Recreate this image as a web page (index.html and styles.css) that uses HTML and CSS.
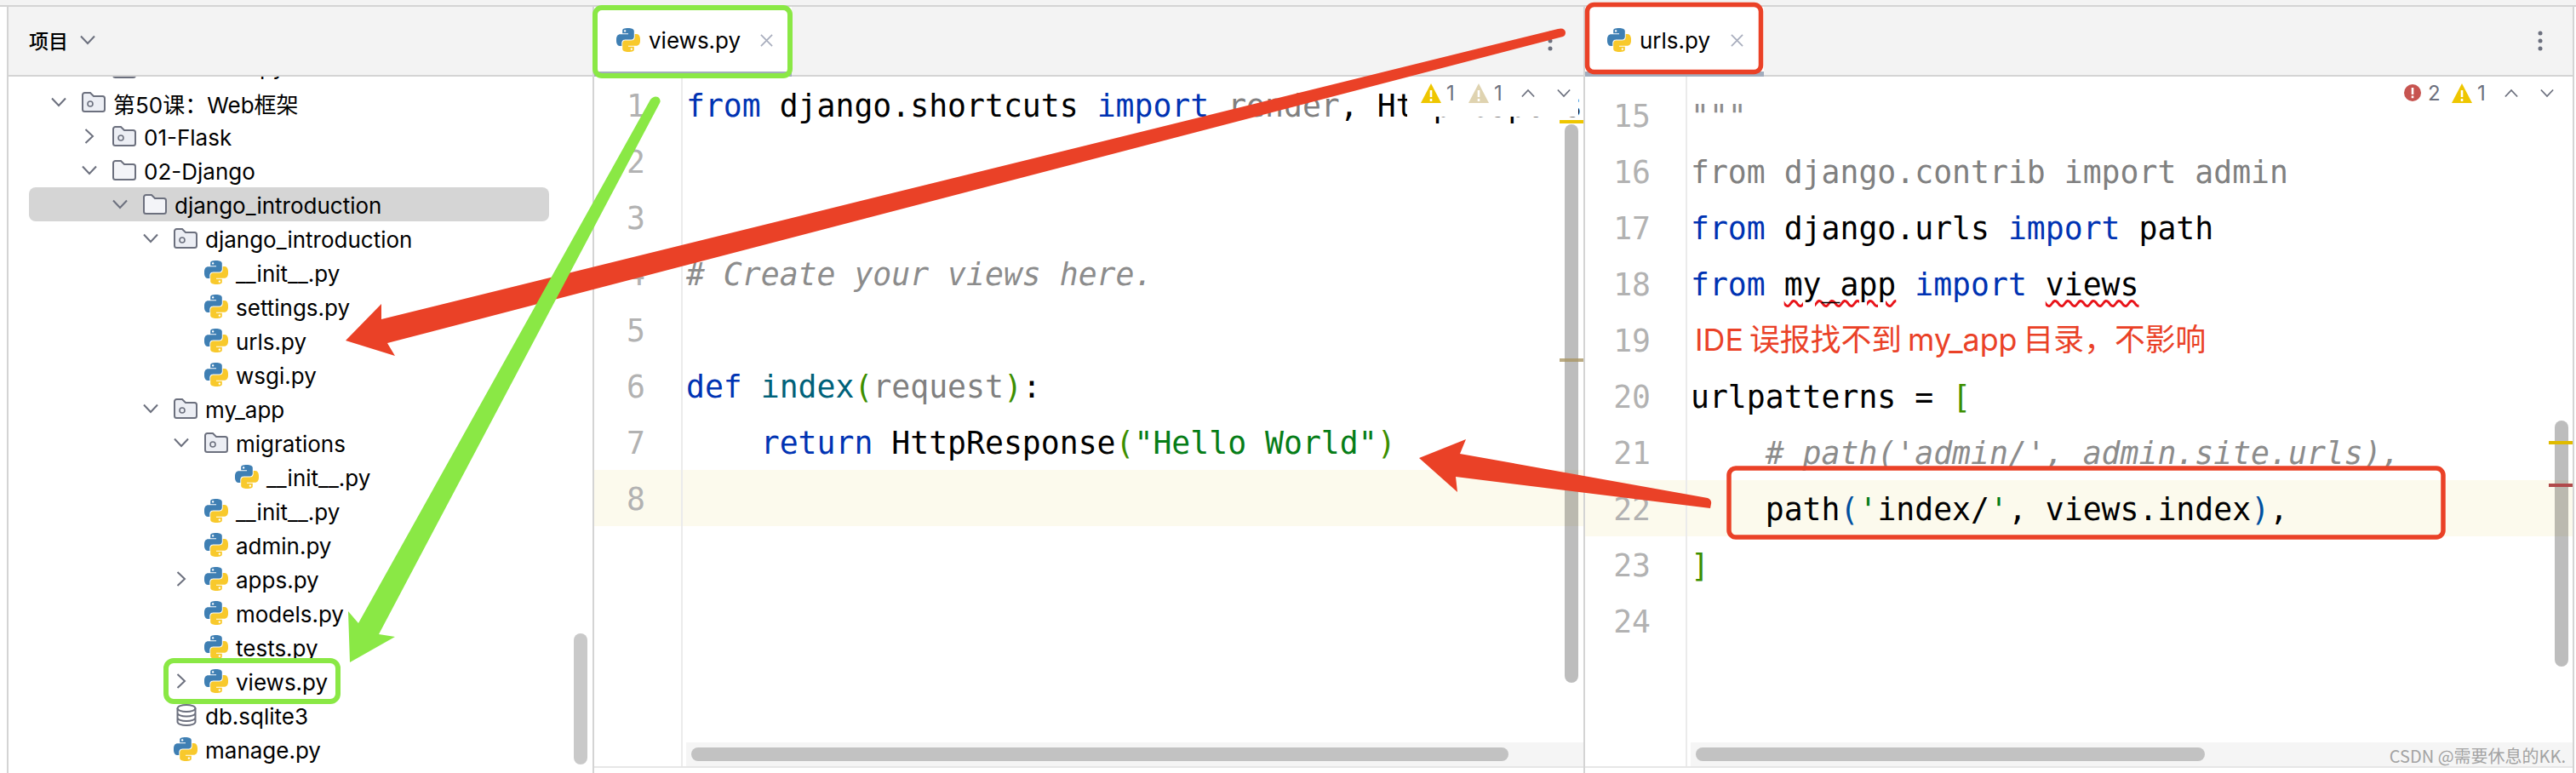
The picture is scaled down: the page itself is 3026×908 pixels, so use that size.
FILE: index.html
```html
<!DOCTYPE html>
<html lang="zh">
<head>
<meta charset="utf-8">
<title>views.py - urls.py</title>
<link rel="stylesheet" href="styles.css">
</head>
<body>
<svg class="defs" width="0" height="0" aria-hidden="true">
  <symbol id="py" viewBox="0 0 24 24">
    <path fill="#3f7fb3" fill-rule="evenodd" d="M14.25.18l.9.2.73.26.59.3.45.32.34.34.25.34.16.33.1.3.04.26.02.2-.01.13V8.5l-.05.63-.13.55-.21.46-.26.38-.3.31-.33.25-.35.19-.35.14-.33.1-.3.07-.26.04-.21.02H8.77l-.69.05-.59.14-.5.22-.41.27-.33.32-.27.35-.2.36-.15.37-.1.35-.07.32-.04.27-.02.21v3.06H3.17l-.21-.03-.28-.07-.32-.12-.35-.18-.36-.26-.36-.36-.35-.46-.32-.59-.28-.73-.21-.88-.14-1.05-.05-1.23.06-1.22.16-1.04.24-.87.32-.71.36-.57.4-.44.42-.33.42-.24.4-.16.36-.1.32-.05.24-.01h.16l.06.01h8.16v-.83H6.18l-.01-2.75-.02-.37.05-.34.11-.31.17-.28.25-.26.31-.23.38-.2.44-.18.51-.15.58-.12.64-.1.71-.06.77-.04.84-.02 1.27.05zm-6.3 1.98l-.23.33-.08.41.08.41.23.34.33.22.41.09.41-.09.33-.22.23-.34.08-.41-.08-.41-.23-.33-.33-.22-.41-.09-.41.09z"/>
    <path fill="#f8c92c" fill-rule="evenodd" d="M21.04 6.11l.28.06.32.12.35.18.36.27.36.35.35.47.32.59.28.73.21.88.14 1.04.05 1.23-.06 1.23-.16 1.04-.24.86-.32.71-.36.57-.4.45-.42.33-.42.24-.4.16-.36.09-.32.05-.24.02-.16-.01h-8.22v.82h5.84l.01 2.76.02.36-.05.34-.11.31-.17.29-.25.25-.31.24-.38.2-.44.17-.51.15-.58.13-.64.09-.71.07-.77.04-.84.01-1.27-.04-1.07-.14-.9-.2-.73-.25-.59-.3-.45-.33-.34-.34-.25-.34-.16-.33-.1-.3-.04-.25-.02-.2.01-.13v-5.34l.05-.64.13-.54.21-.46.26-.38.3-.32.33-.24.35-.2.35-.14.33-.1.3-.06.26-.04.21-.02.13-.01h5.84l.69-.05.59-.14.5-.21.41-.28.33-.32.27-.35.2-.36.15-.36.1-.35.07-.32.04-.28.02-.21V6.07h2.09l.14.01zm-6.47 14.25l-.23.33-.08.41.08.41.23.33.33.23.41.08.41-.08.33-.23.23-.33.08-.41-.08-.41-.23-.33-.33-.23-.41-.08-.41.08z"/>
  </symbol>
  <symbol id="folder" viewBox="0 0 28 24">
    <path fill="#f3f4f8" stroke="#6c707e" stroke-width="2" d="M1 3.5A2.5 2.5 0 0 1 3.5 1H10l4 4h10.5A2.5 2.5 0 0 1 27 7.5v13a2.5 2.5 0 0 1-2.5 2.5h-21A2.5 2.5 0 0 1 1 20.5z"/>
  </symbol>
  <symbol id="module" viewBox="0 0 28 24">
    <path fill="#eceef4" stroke="#6c707e" stroke-width="2" d="M1 3.5A2.5 2.5 0 0 1 3.5 1H10l4 4h10.5A2.5 2.5 0 0 1 27 7.5v13a2.5 2.5 0 0 1-2.5 2.5h-21A2.5 2.5 0 0 1 1 20.5z"/>
    <circle cx="10" cy="14" r="3" fill="none" stroke="#6c707e" stroke-width="1.6"/>
  </symbol>
  <symbol id="db" viewBox="0 0 24 26">
    <g fill="none" stroke="#6c707e" stroke-width="2">
      <ellipse cx="12" cy="5" rx="10.5" ry="4"/>
      <path d="M1.5 5v16c0 2.2 4.7 4 10.5 4s10.500-1.800 10.500-4V5M1.500 10.500c0 2.200 4.700 4 10.500 4s10.500-1.800 10.500-4M1.500 16c0 2.200 4.700 4 10.500 4s10.500-1.800 10.500-4"/>
    </g>
  </symbol>
  <symbol id="down" viewBox="0 0 18 12">
    <path fill="none" stroke="#6c707e" stroke-width="2" d="M1 1.500l8 8.500 8-8.500"/>
  </symbol>
  <symbol id="right" viewBox="0 0 12 18">
    <path fill="none" stroke="#6c707e" stroke-width="2" d="M1.500 1l8.500 8-8.500 8"/>
  </symbol>
  <symbol id="up" viewBox="0 0 18 12">
    <path fill="none" stroke="#6c707e" stroke-width="2" d="M1 10.500l8-8.500 8 8.500"/>
  </symbol>
  <symbol id="close" viewBox="0 0 16 16">
    <path fill="none" stroke="#a8adbd" stroke-width="1.800" d="M1 1l14 14M15 1L1 15"/>
  </symbol>
  <symbol id="dots" viewBox="0 0 6 24">
    <g fill="#6c707e"><circle cx="3" cy="3" r="2.500"/><circle cx="3" cy="12" r="2.500"/><circle cx="3" cy="21" r="2.500"/></g>
  </symbol>
  <symbol id="warn" viewBox="0 0 24 23">
    <path fill="#eec600" d="M12 0l12 23H0z"/>
    <path fill="#fff" d="M10.700 8h2.600v8h-2.600zM10.700 18h2.600v3h-2.600z"/>
  </symbol>
  <symbol id="weak" viewBox="0 0 24 23">
    <path fill="#dfd3b0" d="M12 0l12 23H0z"/>
    <path fill="#fff" d="M10.700 8h2.600v8h-2.600zM10.700 18h2.600v3h-2.600z"/>
  </symbol>
  <symbol id="err" viewBox="0 0 20 20">
    <circle cx="10" cy="10" r="10" fill="#c75450"/>
    <path fill="#fff" d="M8.700 4h2.600v8H8.700zM8.700 13.500h2.600v2.800H8.700z"/>
  </symbol>
</svg>

<div class="topstrip"></div>
<main class="workbench">
  <aside class="project">
    <header class="project-head">
      <span class="project-title">项目</span>
      <svg class="chev-d"><use href="#down"/></svg>
    </header>
    <div class="tree-clip">
      <ul class="tree">
        <li class="row l1 peek"><span class="slot"></span><svg class="ic-dir"><use href="#folder"/></svg><span>webserver.py</span></li>
        <li class="row l0"><span class="slot"><svg class="chev-d"><use href="#down"/></svg></span><svg class="ic-dir"><use href="#module"/></svg><span>第50课：Web框架</span></li>
        <li class="row l1"><span class="slot"><svg class="chev-r"><use href="#right"/></svg></span><svg class="ic-dir"><use href="#module"/></svg><span>01-Flask</span></li>
        <li class="row l1"><span class="slot"><svg class="chev-d"><use href="#down"/></svg></span><svg class="ic-dir"><use href="#folder"/></svg><span>02-Django</span></li>
        <li class="row l2 selected"><span class="slot"><svg class="chev-d"><use href="#down"/></svg></span><svg class="ic-dir"><use href="#folder"/></svg><span>django_introduction</span></li>
        <li class="row l3"><span class="slot"><svg class="chev-d"><use href="#down"/></svg></span><svg class="ic-dir"><use href="#module"/></svg><span>django_introduction</span></li>
        <li class="row l4"><span class="slot"></span><svg class="ic-py"><use href="#py"/></svg><span>__init__.py</span></li>
        <li class="row l4"><span class="slot"></span><svg class="ic-py"><use href="#py"/></svg><span>settings.py</span></li>
        <li class="row l4"><span class="slot"></span><svg class="ic-py"><use href="#py"/></svg><span>urls.py</span></li>
        <li class="row l4"><span class="slot"></span><svg class="ic-py"><use href="#py"/></svg><span>wsgi.py</span></li>
        <li class="row l3"><span class="slot"><svg class="chev-d"><use href="#down"/></svg></span><svg class="ic-dir"><use href="#module"/></svg><span>my_app</span></li>
        <li class="row l4"><span class="slot"><svg class="chev-d"><use href="#down"/></svg></span><svg class="ic-dir"><use href="#module"/></svg><span>migrations</span></li>
        <li class="row l5"><span class="slot"></span><svg class="ic-py"><use href="#py"/></svg><span>__init__.py</span></li>
        <li class="row l4"><span class="slot"></span><svg class="ic-py"><use href="#py"/></svg><span>__init__.py</span></li>
        <li class="row l4"><span class="slot"></span><svg class="ic-py"><use href="#py"/></svg><span>admin.py</span></li>
        <li class="row l4"><span class="slot"><svg class="chev-r"><use href="#right"/></svg></span><svg class="ic-py"><use href="#py"/></svg><span>apps.py</span></li>
        <li class="row l4"><span class="slot"></span><svg class="ic-py"><use href="#py"/></svg><span>models.py</span></li>
        <li class="row l4"><span class="slot"></span><svg class="ic-py"><use href="#py"/></svg><span>tests.py</span></li>
        <li class="row l4"><span class="slot"><svg class="chev-r"><use href="#right"/></svg></span><svg class="ic-py"><use href="#py"/></svg><span>views.py</span></li>
        <li class="row l3 db-row"><span class="slot"></span><svg class="ic-db"><use href="#db"/></svg><span>db.sqlite3</span></li>
        <li class="row l3"><span class="slot"></span><svg class="ic-py"><use href="#py"/></svg><span>manage.py</span></li>
      </ul>
      <div class="thumb-tree"></div>
    </div>
  </aside>

  <section class="editor editor-a">
    <div class="tabbar">
      <div class="tab">
        <svg class="ic-py"><use href="#py"/></svg>
        <span class="tab-name">views.py</span>
        <svg class="ic-close"><use href="#close"/></svg>
      </div>
      <svg class="ic-dots"><use href="#dots"/></svg>
    </div>
    <div class="code-area">
      <div class="gutter">
        <div class="ln">1</div>
        <div class="ln">2</div>
        <div class="ln">3</div>
        <div class="ln">4</div>
        <div class="ln">5</div>
        <div class="ln">6</div>
        <div class="ln">7</div>
        <div class="ln cur">8</div>
      </div>
      <div class="code">
        <div class="cl"><span class="kw">from</span> django.shortcuts <span class="kw">import</span> <span class="un">render</span>, HttpResponse</div>
        <div class="cl"></div>
        <div class="cl"></div>
        <div class="cl"><span class="cm"># Create your views here.</span></div>
        <div class="cl"></div>
        <div class="cl"><span class="kw">def</span> <span class="fn">index</span><span class="br">(</span><span class="un">request</span><span class="br">)</span>:</div>
        <div class="cl">    <span class="kw">return</span> HttpResponse<span class="br">(</span><span class="st">"Hello World"</span><span class="br">)</span></div>
        <div class="cl cur"></div>
      </div>
      <div class="inspect">
        <svg class="ic-tri"><use href="#warn"/></svg><span class="count">1</span>
        <svg class="ic-tri"><use href="#weak"/></svg><span class="count">1</span>
        <svg class="ic-nav first"><use href="#up"/></svg>
        <svg class="ic-nav"><use href="#down"/></svg>
      </div>
      <div class="mark mark-warn"></div>
      <div class="vthumb"></div>
      <div class="mark mark-weak"></div>
      <div class="hscroll"><div class="hthumb"></div></div>
    </div>
  </section>

  <section class="editor editor-b">
    <div class="tabbar">
      <div class="tab">
        <svg class="ic-py"><use href="#py"/></svg>
        <span class="tab-name">urls.py</span>
        <svg class="ic-close"><use href="#close"/></svg>
      </div>
      <svg class="ic-dots"><use href="#dots"/></svg>
    </div>
    <div class="code-area">
      <div class="gutter">
        <div class="ln">15</div>
        <div class="ln">16</div>
        <div class="ln">17</div>
        <div class="ln">18</div>
        <div class="ln">19</div>
        <div class="ln">20</div>
        <div class="ln">21</div>
        <div class="ln cur">22</div>
        <div class="ln">23</div>
        <div class="ln">24</div>
      </div>
      <div class="code">
        <div class="cl"><span class="cm">"""</span></div>
        <div class="cl"><span class="un">from django.contrib import admin</span></div>
        <div class="cl"><span class="kw">from</span> django.urls <span class="kw">import</span> path</div>
        <div class="cl"><span class="kw">from</span> <span class="bad">my_app</span> <span class="kw">import</span> <span class="bad">views</span></div>
        <div class="cl note-line"><span class="note">IDE 误报找不到 my_app 目录，不影响</span></div>
        <div class="cl">urlpatterns = <span class="br">[</span></div>
        <div class="cl">    <span class="cm"># path('admin/', admin.site.urls),</span></div>
        <div class="cl cur">    path<span class="pn">(</span><span class="st">'</span>index/<span class="st">'</span>, views.index<span class="pn">)</span>,</div>
        <div class="cl"><span class="br">]</span></div>
        <div class="cl"></div>
      </div>
      <div class="inspect">
        <svg class="ic-err"><use href="#err"/></svg><span class="count">2</span>
        <svg class="ic-tri"><use href="#warn"/></svg><span class="count">1</span>
        <svg class="ic-nav first"><use href="#up"/></svg>
        <svg class="ic-nav"><use href="#down"/></svg>
      </div>
      <div class="vthumb"></div>
      <div class="mark mark-warn"></div>
      <div class="mark mark-err"></div>
      <div class="hscroll"><div class="hthumb"></div></div>
    </div>
  </section>
</main>

<svg class="annotations" viewBox="0 0 3026 908" aria-hidden="true">
  <g class="frame-green">
    <rect x="699" y="9" width="229" height="80" rx="8"/>
    <rect x="195" y="776" width="202" height="48" rx="9"/>
  </g>
  <g class="frame-red">
    <rect x="1864.500" y="5.500" width="204" height="79" rx="8"/>
    <rect x="2031" y="550" width="839" height="81" rx="8"/>
  </g>
  <path class="arrow-red" d="M406 400L448 357L448 375L1830 34Q1838 32 1839 38Q1839 42 1836 43L455 403L464 418Z"/>
  <path class="arrow-red" d="M1667 538L1722 516L1715 533L2006 585Q2011 587 2010 592L2009 597L1710 560L1712 578Z"/>
  <path class="arrow-green" d="M411 778L409 718L421 732L764 117Q768 112 773 114Q777 117 775 121L445 745L464 748Z"/>
</svg>

<div class="watermark">CSDN @需要休息的KK.</div>
</body>
</html>
```

FILE: styles.css
```css
* { box-sizing: border-box; }

html, body {
  margin: 0;
  padding: 0;
  width: 3026px;
  height: 908px;
  overflow: hidden;
  background: #fff;
  color: #000;
  font-family: Inter, "Noto Sans CJK SC", sans-serif;
}

.defs { position: absolute; }

.topstrip {
  height: 8px;
  background: #f3f3f3;
  border-bottom: 2px solid #d4d4d4;
}

.workbench {
  display: flex;
  height: 900px;
  padding: 0 2px 0 8px;
}

/* project panel */
.project {
  width: 690px;
  flex: none;
  display: flex;
  flex-direction: column;
  border-left: 2px solid #d4d4d4;
  border-right: 2px solid #d4d4d4;
}

.project-head {
  height: 82px;
  flex: none;
  display: flex;
  align-items: center;
  gap: 14px;
  padding: 0 0 2px 24px;
  background: #f3f3f3;
  border-bottom: 2px solid #d4d4d4;
}

.project-title {
  font: 500 23px "Noto Sans CJK SC", sans-serif;
}

.chev-d { width: 18px; height: 12px; flex: none; }
.chev-r { width: 12px; height: 18px; flex: none; margin-left: 3px; }

.tree-clip {
  position: relative;
  flex: 1;
  overflow: hidden;
}

.tree {
  list-style: none;
  margin: -30px 0 0;
  padding: 0;
}

.row {
  display: flex;
  align-items: center;
  height: 40px;
  margin: 0 51px 0 24px;
  font-size: 26px;
  white-space: nowrap;
}

.row > span:last-child { padding-top: 2px; }
.row.peek > span:last-child { padding-top: 0; margin-top: -4px; }

.row.selected { background: #d5d5d5; border-radius: 8px; }

.l0 { padding-left: 26px; }
.l1 { padding-left: 62px; }
.l2 { padding-left: 98px; }
.l3 { padding-left: 134px; }
.l4 { padding-left: 170px; }
.l5 { padding-left: 206px; }

.slot {
  width: 36px;
  flex: none;
  display: flex;
  align-items: center;
}

.ic-dir { width: 28px; height: 24px; flex: none; margin-right: 9px; }
.ic-py { width: 28px; height: 28px; flex: none; margin-right: 9px; }
.ic-db { width: 24px; height: 26px; flex: none; margin: 0 10px 0 3px; }

.thumb-tree {
  position: absolute;
  left: 664px;
  top: 654px;
  width: 16px;
  height: 154px;
  border-radius: 8px;
  background: #c9c9c9;
}

/* editors */
.editor {
  display: flex;
  flex-direction: column;
  min-width: 0;
  overflow: hidden;
}

.editor-a {
  width: 1164px;
  flex: none;
  border-right: 2px solid #d4d4d4;
}

.editor-b {
  flex: 1;
  border-right: 2px solid #d4d4d4;
}

.tabbar {
  height: 82px;
  flex: none;
  display: flex;
  align-items: flex-start;
  justify-content: space-between;
  background: #f3f3f3;
  border-bottom: 2px solid #d4d4d4;
}

.tab {
  display: flex;
  align-items: center;
  height: 82px;
  padding: 0 0 4px 26px;
  background: #fff;
  box-shadow: inset 0 -6px 0 #a3adbd;
}

.editor-a .tab { width: 232px; }
.editor-b .tab { width: 210px; }

.tab .ic-py { margin-right: 10px; }

.tab-name { font-size: 26px; white-space: nowrap; }

.ic-close { width: 15px; height: 15px; flex: none; margin-left: auto; margin-right: 22px; }
.editor-b .ic-close { margin-right: 24px; }

.ic-dots { width: 6px; height: 24px; margin: 28px 36px 0 0; flex: none; }
.editor-b .ic-dots { margin-right: 35px; }

.code-area {
  position: relative;
  flex: none;
  display: flex;
  overflow: hidden;
  height: 810px;
  box-shadow: 0 2px 0 #e6e6e6;
  font: 36.450px/66px "DejaVu Sans Mono", monospace;
}

.gutter {
  flex: none;
  border-right: 2px solid #ebebeb;
  color: #b2b2b2;
  text-align: right;
}

.editor-a .gutter { width: 104px; }
.editor-b .gutter { width: 120px; padding-top: 12px; }

.ln { height: 66px; padding-top: 2px; }
.editor-a .ln { padding-right: 42px; }
.editor-b .ln { padding-right: 41px; }

.code {
  flex: 1;
  min-width: 0;
  overflow: hidden;
}

.editor-b .code { padding-top: 12px; }

.cl { height: 66px; padding: 2px 0 0 4px; white-space: pre; }
.cl.note-line { padding: 0 0 0 9px; }
.cur { background: #fcfaed; }

.kw { color: #0033b3; }
.un { color: #808080; }
.cm { color: #8c8c8c; font-style: italic; }
.fn { color: #00627a; }
.br { color: #3d8f00; }
.pn { color: #0050a0; }
.st { color: #067d17; }

.bad {
  text-decoration: underline wavy #e8141a;
  text-decoration-thickness: 2.500px;
  text-underline-offset: 5px;
}

.note {
  font: 35.800px/66px Inter, "Noto Sans CJK SC", sans-serif;
  word-spacing: -3px;
  color: #ea4127;
}

/* inspection widget */
.inspect {
  position: absolute;
  top: 6px;
  right: 6px;
  height: 41px;
  display: flex;
  align-items: center;
  padding: 0 9px 15px 16px;
  background: #fff;
  font: 24px Inter, sans-serif;
  color: #6c707e;
}

.editor-b .inspect { padding-right: 16px; }

.ic-tri { width: 24px; height: 23px; flex: none; margin-right: 4px; }
.ic-err { width: 20px; height: 20px; flex: none; margin-right: 8px; }
.count { width: 14px; margin-right: 14px; text-align: center; }
.ic-nav { width: 16px; height: 11px; flex: none; margin-left: 26px; }
.ic-nav.first { margin-left: 6px; }

.mark { position: absolute; right: 0; width: 28px; height: 4px; }
.editor-a .mark-warn { top: 51px; background: #eec600; }
.editor-a .mark-weak { top: 331px; background: rgba(170, 150, 100, .8); }
.editor-b .mark-warn { top: 428px; background: #e0bb00; }
.editor-b .mark-err { top: 478px; background: #b04a4a; }

.vthumb {
  position: absolute;
  width: 16px;
  border-radius: 8px;
  background: rgba(0, 0, 0, .26);
}

.editor-a .vthumb { right: 6px; top: 56px; height: 656px; }
.editor-b .vthumb { right: 5px; top: 404px; height: 289px; }

.hscroll {
  position: absolute;
  right: 0;
  bottom: 0;
  height: 28px;
  padding-top: 6px;
  background: #f5f5f5;
}

.editor-a .hscroll { left: 108px; }
.editor-b .hscroll { left: 124px; }

.hthumb {
  height: 16px;
  border-radius: 8px;
  background: #c2c2c2;
  margin-left: 6px;
}

.editor-a .hthumb { width: 960px; }
.editor-b .hthumb { width: 598px; }

/* annotations drawn on top of the screenshot */
.annotations {
  position: absolute;
  left: 0;
  top: 0;
  width: 3026px;
  height: 908px;
  pointer-events: none;
}

.frame-green rect { fill: none; stroke: #8ae845; stroke-width: 6; }
.frame-red rect { fill: none; stroke: #ea4127; stroke-width: 5.500; }
.arrow-red { fill: #ea4127; }
.arrow-green { fill: #8ae845; }

.watermark {
  position: absolute;
  right: 12px;
  bottom: 6px;
  font: 20px "Noto Sans CJK SC", sans-serif;
  color: #a3a3a3;
  white-space: nowrap;
}
```
